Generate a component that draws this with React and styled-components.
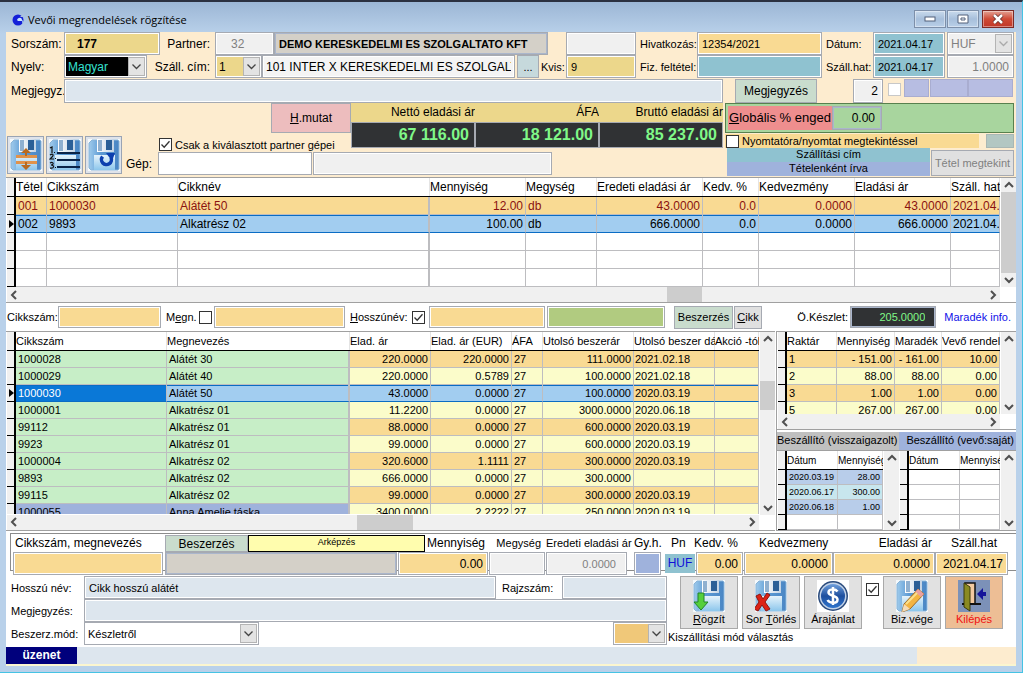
import React from 'react';
import styled, { createGlobalStyle, css } from 'styled-components';

const colors = {
    cream: '#fdeccf',
    amber: '#f9da93',
    gold: '#ecd78b',
    teal: '#8fc2d0',
    periwinkle: '#9fb2dc',
    mist: '#dde6ee',
    off: '#f0f0f0',
    dark: '#303234',
    lime: '#80f888',
    sage: '#c9dccd',
};

const chevron = (stroke) =>
    `url("data:image/svg+xml,%3Csvg xmlns='http://www.w3.org/2000/svg' width='17' height='19'%3E%3Crect x='.5' y='.5' width='16' height='18' fill='%23e3e3e3' stroke='%23b4b4b4'/%3E%3Cpath d='M4.500 7.500l4 4 4-4' fill='none' stroke='%23${stroke}' stroke-width='1.300'/%3E%3C/svg%3E")`;

const tick =
    "url(\"data:image/svg+xml,%3Csvg xmlns='http://www.w3.org/2000/svg' width='11' height='11'%3E%3Cpath d='M1.500 5.500l2.700 2.800 5.300-6' fill='none' stroke='%23333' stroke-width='1.300'/%3E%3C/svg%3E\")";

/* ---- data ---- */

const orderColumns = [
    { title: 'Tétel', w: 31 },
    { title: 'Cikkszám', w: 131 },
    { title: 'Cikknév', frozen: true },
    { title: 'Mennyiség', w: 96, right: true },
    { title: 'Megység', w: 71 },
    { title: 'Eredeti eladási ár', w: 106, right: true },
    { title: 'Kedv. %', w: 56, right: true },
    { title: 'Kedvezmény', w: 96, right: true },
    { title: 'Eladási ár', w: 96, right: true },
    { title: 'Száll. hat', w: 49 },
];

const orderRows = [
    { bg: colors.amber, ink: '#8a1210', cells: ['001', '1000030', 'Alátét 50', '12.00', 'db', '43.0000', '0.0', '0.0000', '43.0000', '2021.04.17'] },
    { bg: '#a2cdf0', current: true, cells: ['002', '9893', 'Alkatrész 02', '100.00', 'db', '666.0000', '0.0', '0.0000', '666.0000', '2021.04.17'] },
    { cells: Array(10).fill('') },
    { cells: Array(10).fill('') },
    { cells: Array(10).fill('') },
];

const itemColumns = [
    { title: 'Cikkszám', w: 151 },
    { title: 'Megnevezés', frozen: true },
    { title: 'Elad. ár', w: 81, right: true },
    { title: 'Elad. ár (EUR)', w: 81, right: true },
    { title: 'ÁFA', w: 31 },
    { title: 'Utolsó beszerár', w: 91, right: true },
    { title: 'Utolsó beszer dátum', w: 81, tight: true },
    { title: 'Akció -tól', w: 44 },
];

const items = [
    ['1000028', 'Alátét 30', '220.0000', '220.0000', '27', '111.0000', '2021.02.18', ''],
    ['1000029', 'Alátét 40', '220.0000', '0.5789', '27', '100.0000', '2021.02.18', ''],
    ['1000030', 'Alátét 50', '43.0000', '0.0000', '27', '100.0000', '2020.03.19', ''],
    ['1000001', 'Alkatrész 01', '11.2200', '0.0000', '27', '3000.0000', '2020.06.18', ''],
    ['99112', 'Alkatrész 01', '88.0000', '0.0000', '27', '600.0000', '2020.03.19', ''],
    ['9923', 'Alkatrész 01', '99.0000', '0.0000', '27', '600.0000', '2020.03.19', ''],
    ['1000004', 'Alkatrész 02', '320.6000', '1.1111', '27', '300.0000', '2020.03.19', ''],
    ['9893', 'Alkatrész 02', '666.0000', '0.0000', '27', '300.0000', '', ''],
    ['99115', 'Alkatrész 02', '99.0000', '0.0000', '27', '300.0000', '2020.03.19', ''],
    ['1000055', 'Anna Amelie táska', '3400.0000', '2.2222', '27', '250.0000', '2020.03.19', ''],
];

const itemRows = items.map((cells, i) => ({
    cells,
    current: i === 2,
    bg: i % 2 ? '#fbfcca' : colors.amber,
    cellBg: (c) => {
        if (i === 2) return c === 0 ? '#0a78d7' : c < 6 ? '#a2cdf0' : null;
        if (c < 2) return i === 9 ? colors.periwinkle : '#c7eec7';
        return null;
    },
    cellInk: (c) => (i === 2 && c === 0 ? '#fff' : null),
}));

const stockColumns = [
    { title: 'Raktár', w: 50 },
    { title: 'Mennyiség', w: 58, right: true },
    { title: 'Maradék', w: 47, right: true },
    { title: 'Vevő rendelés', right: true },
];

const stockRows = [
    { bg: colors.amber, cells: ['1', '- 151.00', '- 161.00', '10.00'] },
    { bg: '#fbfcca', cells: ['2', '88.00', '88.00', '0.00'] },
    { bg: colors.amber, cells: ['3', '1.00', '1.00', '0.00'] },
    { bg: '#fbfcca', cells: ['5', '267.00', '267.00', '0.00'] },
];

const supplyColumns = [
    { title: 'Dátum', w: 51 },
    { title: 'Mennyiség', right: true },
];

const confirmedRows = [
    { bg: '#b8cdea', cells: ['2020.03.19', '28.00'] },
    { bg: '#c8e6ee', cells: ['2020.06.17', '300.00'] },
    { bg: '#b8cdea', cells: ['2020.06.18', '1.00'] },
    { cells: ['', ''] },
];

const ownRows = Array(4).fill({ cells: ['', ''] });

/* ---- icons ---- */

const Floppy = ({ children }) => (
    <svg width="32" height="32" viewBox="0 0 32 32" aria-hidden="true">
        <defs>
            <linearGradient id="disk" x1="0" y1="0" x2="1" y2="0">
                <stop offset="0" stopColor="#9fcbec" />
                <stop offset="0.400" stopColor="#5c9ad4" />
                <stop offset="1" stopColor="#4a86c4" />
            </linearGradient>
            <linearGradient id="plate" x1="0" y1="0" x2="1" y2="0">
                <stop offset="0" stopColor="#ffffff" />
                <stop offset="1" stopColor="#c3d3e4" />
            </linearGradient>
            <linearGradient id="sheet" x1="0" y1="0" x2="0" y2="1">
                <stop offset="0" stopColor="#e6f3fb" />
                <stop offset="1" stopColor="#8cc6ec" />
            </linearGradient>
        </defs>
        <rect width="32" height="32" fill="#f4f9fc" />
        <path d="M4 1h26l1 1v28l-1 1H3l-2-2V4z" fill="url(#disk)" stroke="#8ab4d8" />
        <path d="M9 0h17v13H9z" fill="url(#plate)" />
        <path d="M10 1h4v11h-4z" fill="#8fb0d0" />
        <path d="M18 1h6v10h-6z" fill="#2b5f97" />
        <path d="M6 16h21v15H6z" fill="url(#sheet)" />
        {children}
    </svg>
);

const ArrowsIcon = () => (
    <Floppy>
        <path d="M6 16h21v3H6zM6 22h21v3H6z" fill="#e0924a" />
        <path d="M16 9l-5 5h4v3h2v-3h4zM16 31l-5-5h4v-3h2v3h4z" fill="#b86a20" />
    </Floppy>
);

const ListIcon = () => (
    <Floppy>
        <path d="M8 14h23M8 21h23M8 28h23" stroke="#0a2347" strokeWidth="2" />
        <path d="M1 9l2-1v6M1 16c3-2 4 0 2 2l-2 2h4M1 24c4-2 4 2 1 2 4 0 3 4-1 3" fill="none" stroke="#111" strokeWidth="1.200" />
        <path d="M5 13h1v1H5zM6 19h1v1H6zM6 28h1v1H6z" fill="#111" />
    </Floppy>
);

const RefreshIcon = () => (
    <Floppy>
        <path d="M14.500 17.500a5 5 0 1 0 8.500 1" fill="none" stroke="#0d3fae" strokeWidth="3.500" />
        <path d="M18 14h9l-3 8z" fill="#0d3fae" />
    </Floppy>
);

const SaveIcon = () => (
    <Floppy>
        <path d="M5 13h6v9h4l-7 8-7-8h4z" fill="#55cf3c" stroke="#23842a" />
    </Floppy>
);

const DeleteIcon = () => (
    <Floppy>
        <path d="M1 16l4-2 3 5 4-6 3 2-5 7 5 7-4 2-4-6-4 6-4-2 5-7z" fill="#dc2216" stroke="#8e1510" />
    </Floppy>
);

const EditIcon = () => (
    <Floppy>
        <path d="M22 9l6 5-14 15-8 3 2-8z" fill="#f3b441" stroke="#9a6a2a" />
        <path d="M22 9l6 5-3 3-6-5z" fill="#e9a0a0" />
        <path d="M8 24l6 5-8 3z" fill="#f5dcb8" />
        <path d="M10 24L21 13" stroke="#fbe08c" strokeWidth="2" />
    </Floppy>
);

const DollarIcon = () => (
    <svg width="32" height="32" viewBox="0 0 32 32" aria-hidden="true">
        <defs>
            <linearGradient id="coin" x1="0" y1="0" x2="0" y2="1">
                <stop offset="0" stopColor="#6f9fdc" />
                <stop offset="0.500" stopColor="#1e4f9e" />
                <stop offset="1" stopColor="#2f74cc" />
            </linearGradient>
        </defs>
        <rect width="32" height="32" fill="#fff" />
        <circle cx="16" cy="16" r="15" fill="#294a7c" />
        <circle cx="16" cy="16" r="13.500" fill="#c4d3e8" />
        <circle cx="16" cy="16" r="12" fill="url(#coin)" />
        <path d="M20.500 11.500c-2-3-9-3-9 1s9 2.500 9 7-8 4-10 .5M16 7v18" fill="none" stroke="#fff" strokeWidth="2.500" />
    </svg>
);

const DoorIcon = () => (
    <svg width="32" height="32" viewBox="0 0 32 32" aria-hidden="true">
        <rect width="32" height="32" fill="#7c91b8" />
        <path d="M7 3h10v21H7z" fill="#f3c9a0" stroke="#111" strokeWidth="1.500" />
        <path d="M6 3l6 4v24l-6-4z" fill="#8a8a22" stroke="#3b3b0a" />
        <path d="M4 24h2M12 24h11" stroke="#111" strokeWidth="2" />
        <path d="M19 14l6-6v4h3v4h-3v4z" fill="#14149a" />
    </svg>
);

const LogoIcon = () => (
    <svg width="13" height="13" viewBox="0 0 13 13" aria-hidden="true">
        <circle cx="6" cy="7" r="5.500" fill="#1420d8" />
        <path d="M12 0v4H8z" fill="#a9c1de" />
        <path d="M5 7c1-3 5-3 5 0l1 1H6z" fill="#c8e4ff" />
        <path d="M10 8h2l-2 3z" fill="#8fb8e8" />
    </svg>
);

const Chevron = ({ dir }) => {
    const d = {
        up: 'M3 9l4-4 4 4',
        down: 'M3 5l4 4 4-4',
        left: 'M9 3L5 7l4 4',
        right: 'M5 3l4 4-4 4',
    }[dir];
    return (
        <svg width="14" height="14" viewBox="0 0 14 14" aria-hidden="true">
            <path d={d} fill="none" stroke="#505050" strokeWidth="2" />
        </svg>
    );
};

/* ---- building blocks ---- */

const ScrollBar = ({ vertical, before = 1, thumb = 0, after = 1 }) => (
    <Track $vertical={vertical}>
        <Chevron dir={vertical ? 'up' : 'left'} />
        <Space $grow={before} />
        {thumb > 0 && <Thumb $grow={thumb} />}
        <Space $grow={after} />
        <Chevron dir={vertical ? 'down' : 'right'} />
    </Track>
);

const DataGrid = ({ label, columns, rows, rowHeight, size, headSize = size, height, vbar, hbar }) => (
    <Frame>
        <Clip $height={height}>
            <Table $size={size} $headSize={headSize} aria-label={label}>
                <colgroup>
                    <col width="9" />
                    {columns.map((c) => <col key={c.title} width={c.w} />)}
                </colgroup>
                <thead>
                    <tr>
                        <Marker as="th" />
                        {columns.map((c) => <Th key={c.title}>{c.title}</Th>)}
                    </tr>
                </thead>
                <tbody>
                    {rows.map((row, r) => (
                        <Row key={r} $bg={row.bg} $ink={row.ink} $height={rowHeight} $current={row.current}>
                            <Marker>{row.current && <Pointer />}</Marker>
                            {row.cells.map((cell, c) => (
                                <Td
                                    key={c}
                                    $right={columns[c].right}
                                    $tight={columns[c].tight}
                                    $frozen={columns[c].frozen}
                                    $bg={row.cellBg && row.cellBg(c)}
                                    $ink={row.cellInk && row.cellInk(c)}
                                >
                                    {cell}
                                </Td>
                            ))}
                        </Row>
                    ))}
                </tbody>
            </Table>
        </Clip>
        <ScrollBar vertical {...vbar} />
        {hbar && <ScrollBar {...hbar} />}
    </Frame>
);

const App = () => (
    <>
        <GlobalStyle />
        <Window>
            <TitleBar>
                <LogoIcon />
                <h1>Vevői megrendelések rögzítése</h1>
                <Caption aria-label="Kis méret">
                    <svg width="12" height="6"><rect x="1" y="1" width="10" height="4" fill="#fff" stroke="#53607a" /></svg>
                </Caption>
                <Caption aria-label="Teljes méret">
                    <svg width="12" height="10"><path d="M1 1h10v8H1zM4 4h4v2H4z" fill="#fff" stroke="#53607a" /></svg>
                </Caption>
                <Caption aria-label="Bezárás" $close>
                    <svg width="12" height="10"><path d="M2 1l8 8M10 1l-8 8" stroke="#5c2a28" strokeWidth="4" /><path d="M2 1l8 8M10 1l-8 8" stroke="#fff" strokeWidth="2.500" /></svg>
                </Caption>
            </TitleBar>

            <Client>
                <Header>
                    <Line>
                        <Label $w={53} $size={12} htmlFor="sorszam">Sorszám:</Label>
                        <Field id="sorszam" $w={96} $bg={colors.gold} $size={12} $bold $indent={12} defaultValue="177" />
                        <Label $w={55} $size={12} $right htmlFor="partner">Partner:</Label>
                        <Field id="partner" $w={59} $size={12} $ink="#808080" $indent={15} defaultValue="32" readOnly />
                        <Field aria-label="Partner neve" $bg="#d4d0c8" $bold $flat defaultValue="DEMO KERESKEDELMI ES SZOLGALTATO KFT" readOnly />
                        <Gap $w={18} />
                        <Field aria-label="Kód" $w={70} />
                        <Label $w={61} $pad={4} htmlFor="hiv">Hivatkozás:</Label>
                        <Field id="hiv" $w={125} $bg={colors.amber} defaultValue="12354/2021" />
                        <Label $w={51} $pad={4} htmlFor="datum">Dátum:</Label>
                        <Field id="datum" $w={72} $bg={colors.teal} defaultValue="2021.04.17" />
                        <Gap $w={2} />
                        <Select aria-label="Pénznem" $w={67} $bg={colors.off} $size={12} disabled>
                            <option>HUF</option>
                        </Select>
                    </Line>
                    <Line>
                        <Label $w={53} $size={12} htmlFor="nyelv">Nyelv:</Label>
                        <Select id="nyelv" $w={83} $bg="#000" $ink="#35e0d0" $size={12}>
                            <option>Magyar</option>
                        </Select>
                        <Label $w={68} $size={12} $right htmlFor="szcim">Száll. cím:</Label>
                        <Select id="szcim" $w={47} $bg={colors.gold} $size={12}>
                            <option>1</option>
                        </Select>
                        <Field aria-label="Szállítási cím" $bg="#f4f4f4" $size={12} $indent={3} defaultValue="101 INTER X KERESKEDELMI ES SZOLGALTATO KFT" />
                        <Gap $w={2} />
                        <Button $w={22} $bg="#c6d9dc">...</Button>
                        <Label $w={27} $pad={2} htmlFor="kvis">Kvis:</Label>
                        <Field id="kvis" $w={70} $bg={colors.gold} defaultValue="9" />
                        <Label $w={61} $pad={4} htmlFor="fiz">Fiz. feltétel:</Label>
                        <Field id="fiz" $w={125} $bg={colors.teal} />
                        <Label $w={51} $pad={4} htmlFor="szhat">Száll.hat:</Label>
                        <Field id="szhat" $w={72} $bg={colors.teal} defaultValue="2021.04.17" />
                        <Gap $w={2} />
                        <Field aria-label="Árfolyam" $w={67} $size={12} $ink="#808080" $right defaultValue="1.0000" readOnly />
                    </Line>
                    <NoteLine>
                        <Label $w={53} $size={12} htmlFor="megj">Megjegyz.</Label>
                        <Field id="megj" $bg={colors.mist} />
                        <Gap $w={12} />
                        <Button $w={82} $bg={colors.sage} $size={12}>Megjegyzés</Button>
                        <Gap $w={36} />
                        <Field aria-label="Példány" $w={30} $size={12} $right defaultValue="2" />
                        <Gap $w={5} />
                        <Check aria-label="Jelölés" $soft />
                        <Gap $w={3} />
                        <Swatch $w={25} />
                        <Gap $w={1} />
                        <Swatch $w={38} />
                        <Swatch $w={45} />
                    </NoteLine>

                    <Summary>
                        <Tools>
                            <Tool aria-label="Sorok rendezése"><ArrowsIcon /></Tool>
                            <Tool aria-label="Sorszámozás"><ListIcon /></Tool>
                            <Tool aria-label="Frissítés"><RefreshIcon /></Tool>
                        </Tools>
                        <Middle>
                            <MiddleTop>
                                <Actions>
                                    <Button $w={80} $bg="#edbdbe" $size={12}><span><u>H</u>.mutat</span></Button>
                                    <CheckLabel>
                                        <Check defaultChecked />
                                        Csak a kiválasztott partner gépei
                                    </CheckLabel>
                                </Actions>
                                <Totals>
                                    <dt>Nettó eladási ár</dt>
                                    <dt>ÁFA</dt>
                                    <dt>Bruttó eladási ár</dt>
                                    <dd>67 116.00</dd>
                                    <dd>18 121.00</dd>
                                    <dd>85 237.00</dd>
                                </Totals>
                            </MiddleTop>
                            <Machine>
                                <Label $w={32} $size={12} htmlFor="gep">Gép:</Label>
                                <Field id="gep" $w={154} $bg="#fff" />
                                <Gap $w={1} />
                                <Field aria-label="Gép neve" $w={239} readOnly />
                            </Machine>
                        </Middle>
                        <Options>
                            <Discount>
                                <DiscountLabel htmlFor="glob"><u>G</u>lobális % enged</DiscountLabel>
                                <Field id="glob" $w={50} $bg="#a8d59e" $size={12} $flat $right $indent={6} defaultValue="0.00" />
                            </Discount>
                            <PrintRow>
                                <PrintLabel>
                                    <Check />
                                    Nyomtatóra/nyomtat megtekintéssel
                                </PrintLabel>
                                <Patch />
                            </PrintRow>
                            <ShipRow>
                                <ShipButton><span>Szállítási cím</span><span>Tételenként írva</span></ShipButton>
                                <Button $w={83} $bg="#e0e0e0" disabled>Tétel megtekint</Button>
                            </ShipRow>
                        </Options>
                    </Summary>
                </Header>

                <DataGrid
                    label="Megrendelés tételei"
                    columns={orderColumns}
                    rows={orderRows}
                    rowHeight={18}
                    size={12}
                    height={109}
                    vbar={{ before: 0, thumb: 1, after: 0 }}
                    hbar={{ before: 644, thumb: 35, after: 283 }}
                />

                <SearchBar>
                    <Label $w={51} htmlFor="fcikk">Cikkszám:</Label>
                    <Field id="fcikk" $w={103} $bg={colors.amber} />
                    <Label $w={38} $pad={5} htmlFor="fmegn"><span>M<u>e</u>gn.</span></Label>
                    <Check aria-label="Megnevezés szűrő" />
                    <Gap $w={2} />
                    <Field id="fmegn" $w={131} $bg={colors.amber} />
                    <Label $w={67} $pad={5} htmlFor="hosszu"><span><u>H</u>osszúnév:</span></Label>
                    <Check id="hosszu" defaultChecked />
                    <Gap $w={4} />
                    <Field aria-label="Hosszúnév" $w={116} $bg={colors.amber} />
                    <Gap $w={2} />
                    <Field aria-label="Csoport" $w={118} $bg="#b1cb80" />
                    <Gap $w={9} />
                    <Button $w={59} $bg={colors.sage}>Beszerzés</Button>
                    <Gap $w={1} />
                    <Button $w={28} $bg="#e0e0e0"><span><u>C</u>ikk</span></Button>
                    <Filler />
                    <Label $w={53} htmlFor="keszlet">Ö.Készlet:</Label>
                    <Field id="keszlet" $w={86} $bg={colors.dark} $ink={colors.lime} $flat $right $indent={10} defaultValue="205.0000" readOnly />
                    <Info href="#maradek">Maradék info.</Info>
                </SearchBar>

                <Lists>
                    <DataGrid
                        label="Cikkek"
                        columns={itemColumns}
                        rows={itemRows}
                        rowHeight={17}
                        size={11}
                        height={182}
                        vbar={{ before: 35, thumb: 29, after: 90 }}
                        hbar={{ before: 336, thumb: 55, after: 332 }}
                    />
                    <Side>
                        <DataGrid
                            label="Raktárkészlet"
                            columns={stockColumns}
                            rows={stockRows}
                            rowHeight={17}
                            size={11}
                            height={82}
                            hbar={{}}
                        />
                        <Suppliers>
                            <Supplier>
                                <SupplierTitle $bg="#c0c0c0">Beszállító (visszaigazolt)</SupplierTitle>
                                <DataGrid label="Visszaigazolt" columns={supplyColumns} rows={confirmedRows} rowHeight={15} size={9} headSize={10} height={79} />
                            </Supplier>
                            <Supplier>
                                <SupplierTitle $bg={colors.periwinkle} $right>Beszállító (vevő:saját)</SupplierTitle>
                                <DataGrid label="Vevő saját" columns={supplyColumns} rows={ownRows} rowHeight={15} size={9} headSize={10} height={79} />
                            </Supplier>
                        </Suppliers>
                    </Side>
                </Lists>

                <Entry>
                    <EntryBox>
                        <EntryTitles>
                            <Label $w={152} $size={12} $pad={2} htmlFor="ecikk">Cikkszám, megnevezés</Label>
                            <Button $w={83} $bg={colors.sage} $size={12}>Beszerzés</Button>
                            <Pricing>Arképzés</Pricing>
                            <Label $w={63} $size={12} $pad={2} htmlFor="emenny">Mennyiség</Label>
                            <Label $w={58} $right htmlFor="emegy">Megység</Label>
                            <Label $w={88} htmlFor="eered">Eredeti eladási ár</Label>
                            <Label $w={37} $size={12} htmlFor="egyh">Gy.h.</Label>
                            <Label $w={23} $size={12} htmlFor="epn">Pn</Label>
                            <Label $w={65} $size={12} htmlFor="ekedv">Kedv. %</Label>
                            <Label $w={73} $size={12} htmlFor="ekedvm">Kedvezmeny</Label>
                            <Label $w={105} $size={12} $right htmlFor="eelad">Eladási ár</Label>
                            <Label $w={70} $size={12} $pad={14} htmlFor="eszall">Száll.hat</Label>
                            <Gap $w={9} />
                        </EntryTitles>
                        <EntryFields>
                            <Field id="ecikk" $w={150} $bg={colors.amber} />
                            <Gap $w={2} />
                            <Field aria-label="Megnevezés" $bg="#d4d0c8" $flat readOnly />
                            <Gap $w={1} />
                            <Field id="emenny" $w={90} $bg={colors.amber} $size={12} $right defaultValue="0.00" />
                            <Gap $w={1} />
                            <Field id="emegy" $w={56} readOnly />
                            <Gap $w={1} />
                            <Field id="eered" $w={81} $ink="#808080" $right $indent={10} defaultValue="0.0000" readOnly />
                            <Gap $w={7} />
                            <Field id="egyh" $w={27} $bg={colors.periwinkle} />
                            <Gap $w={4} />
                            <Currency id="epn">HUF</Currency>
                            <Gap $w={1} />
                            <Field id="ekedv" $w={47} $bg={colors.amber} $size={12} $right defaultValue="0.00" />
                            <Gap $w={1} />
                            <Field id="ekedvm" $w={89} $bg={colors.amber} $size={12} $right defaultValue="0.0000" />
                            <Field id="eelad" $w={102} $bg={colors.amber} $size={12} $right defaultValue="0.0000" />
                            <Field id="eszall" $w={73} $bg={colors.amber} $size={12} $right defaultValue="2021.04.17" />
                            <Gap $w={8} />
                        </EntryFields>
                    </EntryBox>

                    <Details>
                        <Form>
                            <Line>
                                <Label $w={73} htmlFor="hnev">Hosszú név:</Label>
                                <Field id="hnev" $bg={colors.mist} defaultValue="Cikk hosszú alátét" />
                                <Label $w={66} $pad={6} htmlFor="rajz">Rajzszám:</Label>
                                <Field id="rajz" $w={105} $bg={colors.mist} />
                            </Line>
                            <Line>
                                <Label $w={73} htmlFor="dmegj">Megjegyzés:</Label>
                                <Field id="dmegj" $bg={colors.mist} />
                            </Line>
                            <Line>
                                <Label $w={73} htmlFor="bmod">Beszerz.mód:</Label>
                                <Select id="bmod" $w={175} $bg="#fff">
                                    <option>Készletről</option>
                                </Select>
                                <Filler />
                                <Select id="kmod" $w={54} $bg="#f0c879" />
                            </Line>
                        </Form>
                        <Commands>
                            <CommandRow>
                                <Command><SaveIcon /><span><u>R</u>ögzít</span></Command>
                                <Command><DeleteIcon /><span>Sor <u>T</u>örlés</span></Command>
                                <Command><DollarIcon /><span>Árajánlat</span></Command>
                                <Check aria-label="Lezárás" defaultChecked />
                                <Command><EditIcon /><span>Biz.vége</span></Command>
                                <Command $exit><DoorIcon /><span>Kilépés</span></Command>
                            </CommandRow>
                            <ShipMode htmlFor="kmod">Kiszállítási mód választás</ShipMode>
                        </Commands>
                    </Details>
                </Entry>

                <Status>
                    <strong>üzenet</strong>
                    <output />
                </Status>
            </Client>
        </Window>
    </>
);

const GlobalStyle = createGlobalStyle`
    * {
        box-sizing: border-box;
    }
    body {
        margin: 0;
        background: #b9d1ea;
        font: 11px "Liberation Sans", Arial, sans-serif;
        color: #000;
    }
    button, input, select {
        font-family: inherit;
        margin: 0;
    }
`;

const Window = styled.main`
    min-height: 100vh;
    padding: 0 6px 5px;
    border-top: 2px solid #2b3040;
    border-right: 1px solid #45c3e4;
    border-bottom: 1px solid #45c3e4;
    background: linear-gradient(#9cb6d5, #b9d1ea 32px);
`;

const TitleBar = styled.header`
    display: flex;
    align-items: center;
    height: 30px;
    padding: 4px 2px 0 6px;
    h1 {
        flex: 1;
        margin: 0 0 0 3px;
        font: 11px "Open Sans", sans-serif;
    }
`;

const Caption = styled.button`
    display: flex;
    align-items: center;
    justify-content: center;
    width: 32px;
    height: 18px;
    margin-left: ${({ $close }) => ($close ? 3 : 1)}px;
    padding: 0;
    border: 1px solid ${({ $close }) => ($close ? '#7c2a26' : '#7d8fa9')};
    background: ${({ $close }) => ($close ? 'linear-gradient(#e3a193, #cf4a36 50%, #c0382a)' : 'linear-gradient(#c9daec, #a7bfdb 50%, #b9cfe8)')};
    box-shadow: inset 0 0 0 1px rgba(255, 255, 255, 0.4);
`;

const Client = styled.div`
    background: #fff;
`;

const Header = styled.section`
    background: ${colors.cream};
`;

const Line = styled.div`
    display: flex;
    align-items: stretch;
    height: 23px;
    padding: 0 2px 0 5px;
`;

const NoteLine = styled(Line)`
    height: 25px;
    padding: 1px 3px 0 5px;
    > input[type='checkbox'] {
        margin-top: 4px;
    }
`;

const Gap = styled.span`
    flex: 0 0 ${({ $w }) => $w}px;
`;

const Filler = styled.span`
    flex: 1;
`;

const Label = styled.label`
    display: flex;
    align-items: center;
    justify-content: ${({ $right }) => ($right ? 'flex-end' : 'flex-start')};
    flex: 0 0 ${({ $w }) => $w}px;
    min-width: 0;
    padding-left: ${({ $pad = 0 }) => $pad}px;
    padding-right: ${({ $right }) => ($right ? 5 : 0)}px;
    font-size: ${({ $size = 11 }) => $size}px;
    white-space: nowrap;
`;

const box = css`
    flex: ${({ $w }) => ($w ? `0 0 ${$w}px` : '1 1 0')};
    width: ${({ $w }) => ($w ? `${$w}px` : 'auto')};
    min-width: 0;
    border: 1px solid #a6aab2;
    border-radius: 0;
    background-color: ${({ $bg = colors.off }) => $bg};
    color: ${({ $ink = '#000' }) => $ink};
    font-size: ${({ $size = 11 }) => $size}px;
    opacity: 1;
`;

const Field = styled.input`
    ${box}
    padding: 0 ${({ $indent = 4 }) => $indent}px;
    font-weight: ${({ $bold }) => ($bold ? 700 : 400)};
    text-align: ${({ $right }) => ($right ? 'right' : 'left')};
    box-shadow: ${({ $flat }) => ($flat ? 'inset 0 0 0 1px #aab6cc' : 'inset 0 0 0 1px #fff')};
`;

const Select = styled.select`
    ${box}
    appearance: none;
    padding: 0 18px 0 3px;
    background-image: ${({ disabled }) => chevron(disabled ? 'aaa' : '444')};
    background-repeat: no-repeat;
    background-position: right 1px center;
    box-shadow: inset 0 0 0 1px #fff;
    &:disabled {
        color: #808080;
    }
`;

const Button = styled.button`
    ${box}
    padding: 0;
    text-align: center;
    white-space: nowrap;
    &:disabled {
        color: #808080;
    }
`;

const Check = styled.input.attrs({ type: 'checkbox' })`
    appearance: none;
    flex: 0 0 13px;
    width: 13px;
    height: 13px;
    border: 1px solid ${({ $soft }) => ($soft ? '#c8c8c8' : '#333')};
    background: #fff;
    &:checked {
        background: #fff ${tick} center no-repeat;
    }
`;

const Swatch = styled.span`
    flex: 0 0 ${({ $w }) => $w}px;
    height: 18px;
    border: 1px solid #a9add0;
    background: #b7bde2;
`;

const Summary = styled.div`
    display: flex;
    height: 74px;
    padding-right: 2px;
`;

const Tools = styled.div`
    display: flex;
    align-items: flex-end;
    gap: 2px;
    flex: 0 0 120px;
    padding: 0 0 3px 1px;
`;

const Tool = styled.button`
    display: flex;
    align-items: center;
    justify-content: center;
    width: 37px;
    height: 38px;
    padding: 0;
    border: 1px solid #9aa4b4;
    background: #dfe3ea;
`;

const Middle = styled.div`
    display: flex;
    flex-direction: column;
    flex: 1;
`;

const MiddleTop = styled.div`
    display: flex;
    height: 49px;
`;

const Actions = styled.div`
    display: flex;
    flex-direction: column;
    flex: 0 0 225px;
    ${Button} {
        flex: 0 0 30px;
        align-self: flex-end;
    }
`;

const CheckLabel = styled.label`
    display: flex;
    align-items: center;
    gap: 3px;
    padding: 5px 0 0 33px;
    white-space: nowrap;
`;

const Totals = styled.dl`
    display: grid;
    grid-template-columns: repeat(3, 1fr);
    grid-template-rows: 19px 26px;
    flex: 1;
    margin: 0;
    text-align: right;
    dt {
        background: ${colors.gold};
        font-size: 12px;
        line-height: 18px;
    }
    dd {
        margin: 0;
        padding-right: 5px;
        border: 1px solid #a6aab2;
        background: ${colors.dark};
        color: ${colors.lime};
        font-size: 16px;
        font-weight: 700;
        line-height: 24px;
    }
`;

const Machine = styled.div`
    display: flex;
    height: 23px;
`;

const Options = styled.div`
    display: flex;
    flex-direction: column;
    flex: 0 0 289px;
    margin-left: 2px;
`;

const Discount = styled.div`
    display: flex;
    height: 30px;
    padding: 2px;
    border: 1px solid #58804e;
    background: #a8d59e;
`;

const DiscountLabel = styled.label`
    flex: 0 0 104px;
    padding-left: 1px;
    background: #ee8e8e;
    font-size: 13px;
    line-height: 24px;
    white-space: nowrap;
`;

const PrintRow = styled.div`
    display: flex;
    justify-content: space-between;
    height: 15px;
    padding-top: 1px;
`;

const PrintLabel = styled.label`
    display: flex;
    align-items: center;
    gap: 3px;
    flex: 0 0 254px;
    padding-left: 1px;
    background: ${colors.amber};
`;

const Patch = styled.span`
    width: 28px;
    border: 1px solid #a9b7b4;
    background: #b3c7c2;
`;

const ShipRow = styled.div`
    display: flex;
    gap: 1px;
    height: 28px;
    padding-left: 2px;
    ${Button} {
        margin-top: 2px;
    }
`;

const ShipButton = styled.button`
    display: grid;
    grid-template-rows: 1fr 1fr;
    flex: 1;
    padding: 0;
    border: 0;
    background: linear-gradient(${colors.teal} 50%, ${colors.periwinkle} 50%);
    font-size: 11px;
`;

/* ---- grids ---- */

const Frame = styled.div`
    display: grid;
    grid-template-columns: minmax(0, 1fr) 16px;
    min-width: 0;
    padding-left: 1px;
    border-top: 1px solid #a0a0a0;
    border-bottom: 1px solid #a0a0a0;
    background: #fff;
`;

const Clip = styled.div`
    height: ${({ $height }) => $height}px;
    overflow: hidden;
`;

const Table = styled.table`
    width: 100%;
    table-layout: fixed;
    border-collapse: separate;
    border-spacing: 0;
    font-size: ${({ $size }) => $size}px;
    thead {
        font-size: ${({ $headSize }) => $headSize}px;
    }
`;

const Th = styled.th`
    height: 19px;
    padding: 0;
    border-bottom: 1px solid #000;
    box-shadow: inset -1px 0 #e4e4e4;
    font-weight: 400;
    text-align: left;
    white-space: nowrap;
    overflow: hidden;
`;

const Td = styled.td`
    padding: 0 ${({ $tight }) => ($tight ? 1 : 2)}px;
    border-right: ${({ $frozen }) => ($frozen ? 2 : 1)}px solid #bdbdc0;
    border-bottom: 1px solid #bdbdc0;
    background: ${({ $bg }) => $bg || 'inherit'};
    color: ${({ $ink }) => $ink || 'inherit'};
    text-align: ${({ $right }) => ($right ? 'right' : 'left')};
    white-space: nowrap;
    overflow: hidden;
`;

const Marker = styled.td`
    padding: 0;
    border-right: 2px solid #000;
    border-bottom: 1px solid #000;
    background: ${colors.off};
`;

const Row = styled.tr`
    height: ${({ $height }) => $height}px;
    background: ${({ $bg = '#fff' }) => $bg};
    color: ${({ $ink = '#000' }) => $ink};
    ${({ $current }) => $current && css`
        ${Td} {
            border-bottom-color: #0a6cc4;
            box-shadow: inset 0 1px #0a6cc4;
        }
    `}
`;

const Pointer = styled.i`
    display: block;
    width: 0;
    margin-left: 2px;
    border: 4px solid transparent;
    border-left: 5px solid #000;
    border-right: 0;
`;

const Track = styled.div`
    display: flex;
    flex-direction: ${({ $vertical }) => ($vertical ? 'column' : 'row')};
    align-items: center;
    width: ${({ $vertical }) => ($vertical ? '15px' : 'auto')};
    height: ${({ $vertical }) => ($vertical ? 'auto' : '15px')};
    margin-left: ${({ $vertical }) => ($vertical ? 1 : 0)}px;
    background: ${colors.off};
    svg {
        flex: none;
    }
`;

const Space = styled.span`
    flex: ${({ $grow }) => $grow} 1 0;
`;

const Thumb = styled.span`
    flex: ${({ $grow }) => $grow} 1 0;
    align-self: stretch;
    background: #cdcdcd;
`;

const SearchBar = styled.div`
    display: flex;
    align-items: center;
    height: 28px;
    padding: 0 5px 0 1px;
    ${Field} {
        height: 22px;
    }
    ${Button} {
        height: 23px;
    }
`;

const Info = styled.a`
    margin-left: 8px;
    color: #1010e8;
    text-decoration: none;
    white-space: nowrap;
`;

const Lists = styled.div`
    display: grid;
    grid-template-columns: minmax(0, 1fr) 240px;
    gap: 1px;
`;

const Side = styled.div`
    display: flex;
    flex-direction: column;
    min-width: 0;
    border-left: 1px solid #a0a0a0;
`;

const Suppliers = styled.div`
    display: grid;
    grid-template-columns: 122px minmax(0, 1fr);
    margin-top: 2px;
`;

const Supplier = styled.section`
    min-width: 0;
`;

const SupplierTitle = styled.h2`
    height: 18px;
    margin: 0;
    padding-right: 2px;
    background: ${({ $bg }) => $bg};
    font-size: 11px;
    font-weight: 400;
    line-height: 17px;
    text-align: ${({ $right }) => ($right ? 'right' : 'left')};
    white-space: nowrap;
`;

/* ---- entry form ---- */

const Entry = styled.section`
    padding-top: 2px;
`;

const EntryBox = styled.div`
    margin-left: 4px;
    border: 1px solid #8c8c8c;
    border-right: 0;
`;

const EntryTitles = styled.div`
    display: flex;
    height: 18px;
    padding: 0 0 0 2px;
    ${Button} {
        margin-top: 1px;
    }
`;

const EntryFields = styled.div`
    display: flex;
    height: 23px;
    margin-bottom: -5px;
    padding-left: 2px;
`;

const Pricing = styled.button`
    flex: 1;
    margin: 1px 0 0;
    padding: 0 0 4px;
    border: 1px solid #000;
    background: #fffdae;
    font-size: 9px;
    line-height: 10px;
`;

const Currency = styled.output`
    flex: 0 0 30px;
    margin: 2px 0;
    background: ${colors.teal};
    color: #1010d8;
    font-size: 12px;
    line-height: 19px;
    text-align: center;
`;

const Details = styled.div`
    display: flex;
    height: 76px;
    padding-top: 5px;
`;

const Form = styled.div`
    flex: 1;
    ${Line} {
        padding-right: 0;
    }
`;

const Commands = styled.div`
    display: flex;
    flex-direction: column;
    flex: 0 0 349px;
`;

const CommandRow = styled.div`
    display: flex;
    gap: 4px;
    padding: 0 11px 0 13px;
    ${Check} {
        margin-top: 7px;
    }
`;

const Command = styled.button`
    display: flex;
    flex-direction: column;
    align-items: center;
    justify-content: space-between;
    flex: 0 0 58px;
    height: 53px;
    padding: 3px 0;
    border: 1px solid #a9a9a9;
    background: ${({ $exit }) => ($exit ? '#edbe95' : '#e1e1e1')};
    color: ${({ $exit }) => ($exit ? '#f01010' : '#000')};
    font-size: 11px;
    white-space: nowrap;
`;

const ShipMode = styled.label`
    margin-top: 2px;
    padding-left: 1px;
`;

const Status = styled.footer`
    display: flex;
    height: 19px;
    border-bottom: 2px solid #fbf6cf;
    background: ${colors.cream};
    strong {
        flex: 0 0 71px;
        background: #00007c;
        color: #fff;
        font-size: 12px;
        line-height: 16px;
        text-align: center;
    }
    output {
        flex: 1;
        margin-right: 99px;
        background: ${colors.mist};
    }
`;

export default App;
